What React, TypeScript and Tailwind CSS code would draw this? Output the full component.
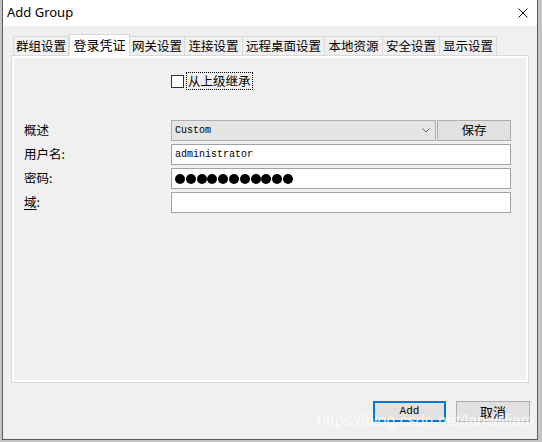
import React from "react";

const cjk = { fontFamily: '"Noto Sans CJK SC", "Noto Sans", sans-serif' };
const mono = { fontFamily: '"Liberation Mono", "DejaVu Sans Mono", monospace' };

const tabs: { label: string; w: string; active?: boolean }[] = [
  { label: "群组设置", w: "w-[56px]" },
  { label: "登录凭证", w: "w-[61px]", active: true },
  { label: "网关设置", w: "w-[56px]" },
  { label: "连接设置", w: "w-[59px]" },
  { label: "远程桌面设置", w: "w-[83px]" },
  { label: "本地资源", w: "w-[59px]" },
  { label: "安全设置", w: "w-[58px]" },
  { label: "显示设置", w: "w-[58px]" },
];

function Row({ label, children }: { label: React.ReactNode; children: React.ReactNode }) {
  return (
    <div className="flex items-center h-[21px]">
      <div className="w-[157px] pl-[10px] text-[12.5px] text-black leading-none" style={cjk}>
        {label}
      </div>
      {children}
    </div>
  );
}

export default function App() {
  return (
    <div className="w-[542px] h-[442px] bg-[#c4c4c4] relative overflow-hidden" style={cjk}>
      <div className="ml-[2px] w-[536px] h-[440px] bg-[#f0f0f0] border-x border-b border-[#5c5c5c] flex flex-col">
        {/* title bar */}
        <div className="h-[26px] bg-white flex items-center justify-between pl-[4px] pr-[9px] shrink-0">
          <span className="text-[13px] text-black" style={{ fontFamily: '"Noto Sans", "Open Sans", sans-serif' }}>
            Add Group
          </span>
          <svg width="10" height="10" viewBox="0 0 10 10">
            <path d="M0.5 0.5 L9.5 9.5 M9.5 0.5 L0.5 9.5" stroke="#111" strokeWidth="1" />
          </svg>
        </div>

        {/* body */}
        <div className="flex flex-col px-[8px] pt-[8px]">
          {/* tabs */}
          <div className="flex items-end h-[21px] pl-[2px]">
            {tabs.map((t, i) =>
              t.active ? (
                <div
                  key={t.label}
                  className={`${t.w} h-[22px] -mb-px relative z-10 bg-white border-x border-t border-[#d9d9d9] flex items-center justify-center text-[13px] text-black leading-none pb-[2px]`}
                >
                  {t.label}
                </div>
              ) : (
                <div
                  key={t.label}
                  className={`${t.w} h-[19px] bg-[#f0f0f0] border-x border-t border-[#d9d9d9] ${i === 0 ? "" : "-ml-px"} flex items-center justify-center text-[12.5px] text-black leading-none`}
                >
                  {t.label}
                </div>
              )
            )}
          </div>

          {/* panel */}
          <div className="h-[328px] border border-[#d9d9d9]">
            <div className="h-full border-2 border-white bg-[#f0f0f0] flex flex-col">
              {/* inherit checkbox */}
              <div className="flex items-center h-[18px] mt-[14px] ml-[157px]">
                <div className="w-[13px] h-[13px] border border-[#333] bg-white" />
                <div className="ml-[2px] h-[18px] border border-dotted border-black px-[1px] flex items-center text-[12.5px] text-black leading-none">
                  从上级继承
                </div>
              </div>

              <div className="flex flex-col gap-[3px] mt-[30px]">
                <Row label="概述">
                  <div className="w-[265px] h-[21px] bg-[#e5e5e5] border border-[#adadad] flex items-center justify-between pl-[3px] pr-[5px]">
                    <span className="text-[10px] text-black" style={mono}>
                      Custom
                    </span>
                    <svg width="8" height="5" viewBox="0 0 8 5">
                      <path d="M0.5 0.5 L4 4 L7.5 0.5" stroke="#606060" strokeWidth="1" fill="none" />
                    </svg>
                  </div>
                  <div className="ml-px w-[74px] h-[21px] bg-[#e1e1e1] border border-[#adadad] flex items-center justify-center text-[12.5px] text-black leading-none">
                    保存
                  </div>
                </Row>
                <Row label="用户名:">
                  <div className="w-[340px] h-[21px] bg-white border border-[#a3a3a3] flex items-center pl-[3px]">
                    <span className="text-[10px] text-black" style={mono}>
                      administrator
                    </span>
                  </div>
                </Row>
                <Row label="密码:">
                  <div className="w-[340px] h-[21px] bg-white border border-[#a3a3a3] flex items-center pl-[3px] gap-[0.8px]">
                    {Array.from({ length: 11 }).map((_, i) => (
                      <div key={i} className="w-[10px] h-[10px] rounded-full bg-black" />
                    ))}
                  </div>
                </Row>
                <Row
                  label={
                    <span>
                      <span className="underline underline-offset-2">域</span>:
                    </span>
                  }
                >
                  <div className="w-[340px] h-[21px] bg-white border border-[#a3a3a3]" />
                </Row>
              </div>
            </div>
          </div>

          {/* buttons */}
          <div className="flex justify-end gap-[10px] mt-[18px] -mr-[1px]">
            <div className="w-[73px] h-[21px] bg-[#e1e1e1] border-2 border-[#0078d7] flex items-center justify-center">
              <span className="text-[11px] text-black" style={mono}>
                Add
              </span>
            </div>
            <div className="w-[74px] h-[21px] bg-[#e1e1e1] border border-[#adadad] flex items-center justify-center text-[13px] text-black leading-none">
              取消
            </div>
          </div>
        </div>
      </div>

      {/* watermark */}
      <div
        className="absolute left-[317px] top-[413px] text-[16px] leading-none text-white/75 pointer-events-none"
        style={{ fontFamily: '"Liberation Sans", Arial, sans-serif' }}
      >
        https://blog.csdn.net/lanwilliam
      </div>
    </div>
  );
}
